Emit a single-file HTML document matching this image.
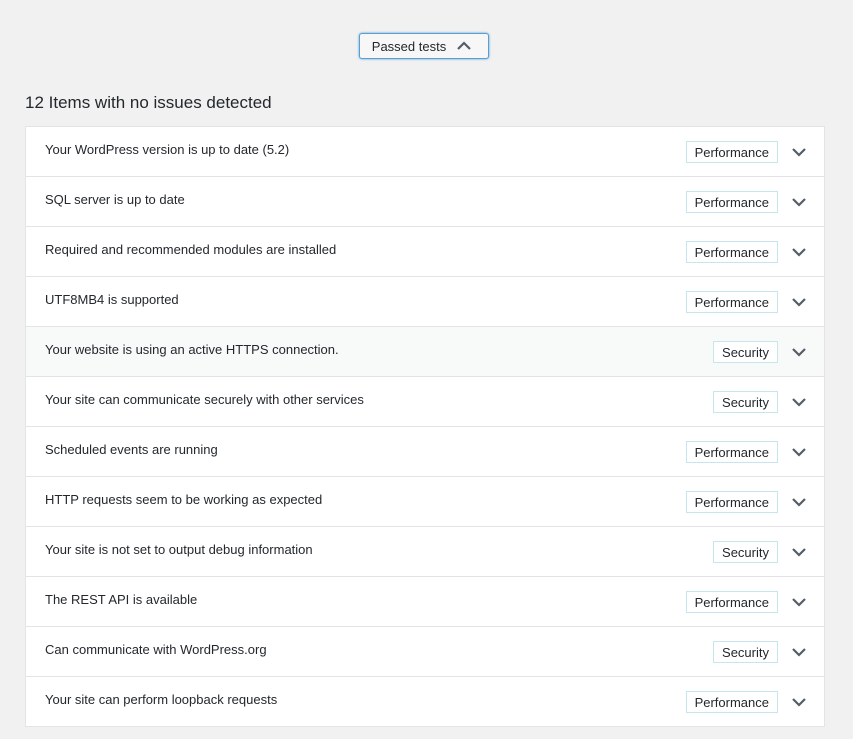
<!DOCTYPE html>
<html><head><style>
body{margin:0;background:#f1f1f1;font-family:"Liberation Sans",sans-serif;color:#23282d;width:853px;height:739px;overflow:hidden;position:relative}
.btn{position:absolute;left:359px;top:33px;width:128px;height:24px;border:1px solid #5b9dd9;border-radius:3px;background:#f7f7f7;box-shadow:0 0 2px rgba(30,140,190,.8);font-size:13px;line-height:25px;text-align:center}
.btn span{margin-right:24px;margin-left:-6px}
.btn svg{position:absolute;right:17px;top:7px}
h2{position:absolute;left:25px;top:93px;margin:0;font-size:17px;font-weight:normal;color:#23282d}
.list{position:absolute;left:25px;top:126px;width:798px;border:1px solid #e2e4e7;background:#fff}
.row{height:49px;border-bottom:1px solid #e2e4e7;position:relative;font-size:13px}
.row:last-child{border-bottom:none}
.row.h{background:#f8f9f9}
.t{position:absolute;left:19px;top:15px}
.b{position:absolute;right:46px;top:14px;height:20px;line-height:21px;border:1px solid #c4e6ec;padding:0 8px;font-size:13px;background:#fff}
.c{position:absolute;right:18px;top:21px}
</style></head><body>
<div class="btn"><span>Passed tests</span><svg width="14" height="9" viewBox="0 0 14 9"><path d="M1 8L7 2L13 8" fill="none" stroke="#555d66" stroke-width="2.2"/></svg></div>
<h2>12 Items with no issues detected</h2>
<div class="list">
<div class="row"><div class="t">Your WordPress version is up to date (5.2)</div><div class="b">Performance</div><svg class="c" width="14" height="9" viewBox="0 0 14 9"><path d="M1 1L7 7L13 1" fill="none" stroke="#555d66" stroke-width="2.2"/></svg></div>
<div class="row"><div class="t">SQL server is up to date</div><div class="b">Performance</div><svg class="c" width="14" height="9" viewBox="0 0 14 9"><path d="M1 1L7 7L13 1" fill="none" stroke="#555d66" stroke-width="2.2"/></svg></div>
<div class="row"><div class="t">Required and recommended modules are installed</div><div class="b">Performance</div><svg class="c" width="14" height="9" viewBox="0 0 14 9"><path d="M1 1L7 7L13 1" fill="none" stroke="#555d66" stroke-width="2.2"/></svg></div>
<div class="row"><div class="t">UTF8MB4 is supported</div><div class="b">Performance</div><svg class="c" width="14" height="9" viewBox="0 0 14 9"><path d="M1 1L7 7L13 1" fill="none" stroke="#555d66" stroke-width="2.2"/></svg></div>
<div class="row h"><div class="t">Your website is using an active HTTPS connection.</div><div class="b">Security</div><svg class="c" width="14" height="9" viewBox="0 0 14 9"><path d="M1 1L7 7L13 1" fill="none" stroke="#555d66" stroke-width="2.2"/></svg></div>
<div class="row"><div class="t">Your site can communicate securely with other services</div><div class="b">Security</div><svg class="c" width="14" height="9" viewBox="0 0 14 9"><path d="M1 1L7 7L13 1" fill="none" stroke="#555d66" stroke-width="2.2"/></svg></div>
<div class="row"><div class="t">Scheduled events are running</div><div class="b">Performance</div><svg class="c" width="14" height="9" viewBox="0 0 14 9"><path d="M1 1L7 7L13 1" fill="none" stroke="#555d66" stroke-width="2.2"/></svg></div>
<div class="row"><div class="t">HTTP requests seem to be working as expected</div><div class="b">Performance</div><svg class="c" width="14" height="9" viewBox="0 0 14 9"><path d="M1 1L7 7L13 1" fill="none" stroke="#555d66" stroke-width="2.2"/></svg></div>
<div class="row"><div class="t">Your site is not set to output debug information</div><div class="b">Security</div><svg class="c" width="14" height="9" viewBox="0 0 14 9"><path d="M1 1L7 7L13 1" fill="none" stroke="#555d66" stroke-width="2.2"/></svg></div>
<div class="row"><div class="t">The REST API is available</div><div class="b">Performance</div><svg class="c" width="14" height="9" viewBox="0 0 14 9"><path d="M1 1L7 7L13 1" fill="none" stroke="#555d66" stroke-width="2.2"/></svg></div>
<div class="row"><div class="t">Can communicate with WordPress.org</div><div class="b">Security</div><svg class="c" width="14" height="9" viewBox="0 0 14 9"><path d="M1 1L7 7L13 1" fill="none" stroke="#555d66" stroke-width="2.2"/></svg></div>
<div class="row"><div class="t">Your site can perform loopback requests</div><div class="b">Performance</div><svg class="c" width="14" height="9" viewBox="0 0 14 9"><path d="M1 1L7 7L13 1" fill="none" stroke="#555d66" stroke-width="2.2"/></svg></div>
</div>
</body></html>
